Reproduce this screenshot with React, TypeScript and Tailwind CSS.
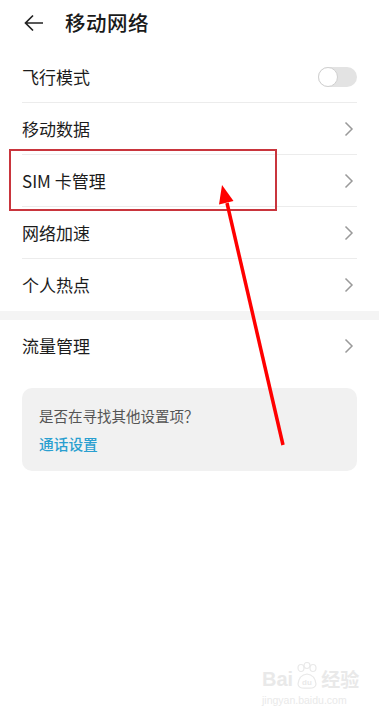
import { ReactNode } from "react";

const font = { fontFamily: '"Noto Sans CJK SC", "Noto Sans", sans-serif' };

function Chevron() {
  return (
    <svg width="10" height="16" viewBox="0 0 10 16" className="shrink-0">
      <path d="M1.5 1.5 L8 8 L1.5 14.5" fill="none" stroke="#9a9a9a" strokeWidth="1.5" />
    </svg>
  );
}

function Row({ label, last, right }: { label: string; last?: boolean; right?: ReactNode }) {
  return (
    <div className="px-[22px]">
      <div
        className={
          "h-[52px] flex items-center justify-between " +
          (last ? "" : "border-b border-[#ececec]")
        }
      >
        <span className="text-[17px] text-[#1c1c1c]">{label}</span>
        <div className="pr-[3px]">{right ?? <Chevron />}</div>
      </div>
    </div>
  );
}

function Toggle() {
  return (
    <div className="w-[39px] h-[20px] rounded-full bg-[#e3e3e3] relative -mr-[3px]">
      <div className="absolute left-0 top-0 w-[20px] h-[20px] rounded-full bg-white border border-[#d0d0d0]" />
    </div>
  );
}

export default function App() {
  return (
    <div className="relative w-[379px] h-[716px] bg-white overflow-hidden" style={font}>
      <div className="h-[51px] flex items-center px-[24px] gap-[21px] pb-[6px]">
        <svg width="20" height="18" viewBox="0 0 20 18">
          <path d="M19 9 H2 M9 1.5 L1.5 9 L9 16.5" fill="none" stroke="#222" strokeWidth="1.7" />
        </svg>
        <span className="text-[20.5px] font-medium text-[#1a1a1a] tracking-[0.5px]">移动网络</span>
      </div>

      <Row label="飞行模式" right={<Toggle />} />
      <Row label="移动数据" />
      <Row label="SIM 卡管理" />
      <Row label="网络加速" />
      <Row label="个人热点" last />

      <div className="h-[9px] bg-[#f4f4f4]" />

      <Row label="流量管理" last />

      <div className="mx-[22px] mt-[16px] h-[83px] rounded-[10px] bg-[#f1f1f1] px-[17px] pt-[18px]">
        <div className="text-[14.5px] leading-[20px] text-[#555]">是否在寻找其他设置项？</div>
        <div className="mt-[8px] text-[14.7px] leading-[20px] font-medium text-[#2a9fd0]">通话设置</div>
      </div>

      {/* annotation overlay */}
      <div className="absolute left-[9px] top-[149px] w-[268px] h-[62px] border-2 border-[#c9353d]" />
      <svg className="absolute left-0 top-0" width="379" height="716" viewBox="0 0 379 716">
        <line x1="283" y1="445" x2="227" y2="203" stroke="#ff0000" strokeWidth="3.5" />
        <polygon points="222,185 233.5,201 219,204.5" fill="#ff0000" />
      </svg>

      {/* watermark */}
      <div className="absolute left-[262px] top-[662px] flex flex-col items-start text-[#e9e9e9]">
        <div className="flex items-end gap-[2px]">
          <span className="text-[20px] leading-[22px] font-bold" style={{ fontFamily: '"Liberation Sans", sans-serif' }}>
            Bai
          </span>
          <svg width="24" height="28" viewBox="0 0 24 28">
            <ellipse cx="6" cy="6" rx="3" ry="3.5" fill="none" stroke="#e9e9e9" strokeWidth="1.2" />
            <ellipse cx="12" cy="3.5" rx="3" ry="3" fill="none" stroke="#e9e9e9" strokeWidth="1.2" />
            <ellipse cx="18" cy="6" rx="3" ry="3.5" fill="none" stroke="#e9e9e9" strokeWidth="1.2" />
            <path d="M3 22 Q4 13 12 12 Q20 13 21 22 Q21 27 12 26 Q3 27 3 22 Z" fill="none" stroke="#e9e9e9" strokeWidth="1.2" />
            <text x="12" y="23" fontSize="8" textAnchor="middle" fill="#e9e9e9" fontFamily="Liberation Sans, sans-serif" fontWeight="bold">du</text>
          </svg>
          <span className="text-[19px] leading-[22px] font-bold">经验</span>
        </div>
        <span className="text-[10.5px] leading-[14px] mt-[3px]" style={{ fontFamily: '"Liberation Sans", sans-serif' }}>
          jingyan.baidu.com
        </span>
      </div>
    </div>
  );
}
